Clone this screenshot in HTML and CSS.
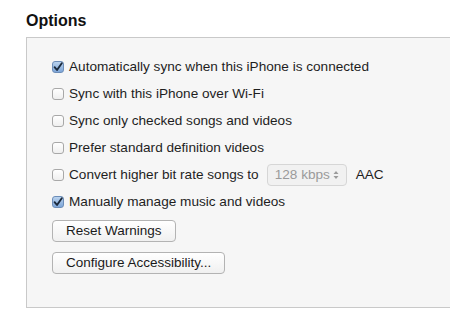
FILE: index.html
```html
<!DOCTYPE html>
<html>
<head>
<meta charset="utf-8">
<link rel="stylesheet" href="styles.css">
</head>
<body>
<h1 class="title">Options</h1>
<div class="panel">
  <div class="rows">
    <label class="row"><span class="cb checked"><svg viewBox="0 0 12 12" width="12" height="12"><path d="M2.6 6.2 L5 9 L9.8 2.2" fill="none" stroke="#1b2a3d" stroke-width="1.9" stroke-linecap="round" stroke-linejoin="round"/></svg></span>Automatically sync when this iPhone is connected</label>
    <label class="row"><span class="cb"></span>Sync with this iPhone over Wi-Fi</label>
    <label class="row"><span class="cb"></span>Sync only checked songs and videos</label>
    <label class="row"><span class="cb"></span>Prefer standard definition videos</label>
    <label class="row"><span class="cb"></span>Convert higher bit rate songs to
      <span class="select">128 kbps<svg class="arrows" viewBox="0 0 6 10" width="6" height="10"><path d="M0.5 4 L3 1 L5.5 4 Z M0.5 6 L3 9 L5.5 6 Z" fill="#9a9a9a"/></svg></span>
      <span class="aac">AAC</span></label>
    <label class="row"><span class="cb checked"><svg viewBox="0 0 12 12" width="12" height="12"><path d="M2.6 6.2 L5 9 L9.8 2.2" fill="none" stroke="#1b2a3d" stroke-width="1.9" stroke-linecap="round" stroke-linejoin="round"/></svg></span>Manually manage music and videos</label>
  </div>
  <div class="buttons">
    <button class="btn">Reset Warnings</button>
    <button class="btn">Configure Accessibility...</button>
  </div>
</div>
</body>
</html>
```
FILE: styles.css
```css
html, body {
  margin: 0;
  padding: 0;
  background: #ffffff;
  overflow: hidden;
}
body {
  font-family: "Liberation Sans", Arial, sans-serif;
  color: #1e1e1e;
  width: 450px;
  height: 313px;
}
.title {
  margin: 0;
  padding: 11px 0 0 26px;
  height: 26px;
  font-size: 16px;
  line-height: 20px;
  font-weight: bold;
  color: #111;
}
.panel {
  margin-left: 26px;
  width: 440px;
  height: 269px;
  background: #f6f6f6;
  border: 1px solid #c9c9c9;
  box-sizing: content-box;
}
.rows {
  display: flex;
  flex-direction: column;
  padding: 15px 0 0 25px;
}
.row {
  display: flex;
  align-items: center;
  height: 27px;
  font-size: 13.6px;
  white-space: nowrap;
}
.cb {
  width: 12px;
  height: 12px;
  box-sizing: border-box;
  border: 1px solid #a8a8a8;
  border-radius: 3px;
  background: linear-gradient(#ffffff, #efefef);
  margin-right: 5px;
  position: relative;
  flex: none;
}
.cb.checked {
  background: linear-gradient(#b9d2ee, #7ea6d8);
  border-color: #6c8db8;
}
.cb svg {
  position: absolute;
  left: -1px;
  top: -1px;
}
.select {
  display: inline-flex;
  align-items: center;
  justify-content: space-between;
  width: 80px;
  height: 22px;
  box-sizing: border-box;
  margin-left: 8px;
  padding: 0 7px 0 7px;
  border: 1px solid #d6d6d6;
  border-radius: 4px;
  background: #f1f1f1;
  color: #9a9a9a;
  font-size: 13.6px;
}
.aac {
  margin-left: 9px;
}
.buttons {
  display: flex;
  flex-direction: column;
  align-items: flex-start;
  gap: 10px;
  padding: 5px 0 0 25px;
}
.btn {
  height: 22px;
  padding: 0 13px;
  font-family: "Liberation Sans", Arial, sans-serif;
  font-size: 13.5px;
  color: #1a1a1a;
  background: linear-gradient(#ffffff, #f0f0f0);
  border: 1px solid #b3b3b3;
  border-radius: 4px;
  line-height: 20px;
}
```
